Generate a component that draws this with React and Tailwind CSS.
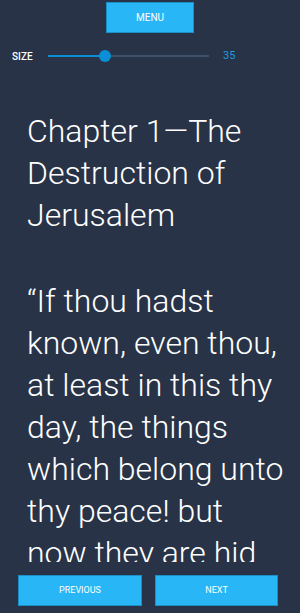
export default function App() {
  const font = { fontFamily: "Roboto, 'Noto Sans', sans-serif" };
  return (
    <div className="flex h-[613px] w-[300px] flex-col overflow-hidden bg-[#283347]" style={font}>
      <div className="flex justify-center pt-[2px]">
        <button className="h-[31px] w-[88px] border border-[#1d8fc7] bg-[#29b6f6] text-[10px] text-white">
          MENU
        </button>
      </div>
      <div className="mt-[9px] flex h-[28px] items-center pl-[12px]">
        <span className="w-[36px] text-[10px] font-medium text-white">SIZE</span>
        <div className="relative h-[2px] w-[161px] bg-[#3e5068]">
          <div className="absolute left-0 top-0 h-[2px] w-[57px] bg-[#0a8fd6]" />
          <div className="absolute left-[51px] top-[-5px] h-[12px] w-[12px] rounded-full bg-[#0a8fd6]" />
        </div>
        <span className="ml-[14px] text-[11px] text-[#1e9be0]">35</span>
      </div>
      <div className="min-h-0 flex-1 overflow-hidden pl-[27px] pr-[12px] pt-[40px] text-[32px] font-light leading-[42px] text-white">
        <h1>Chapter 1—The Destruction of Jerusalem</h1>
        <p className="mt-[44px]">
          “If thou hadst known, even thou, at least in this thy day, the things which belong unto thy peace! but now they are hid from thine eyes.
        </p>
      </div>
      <div className="flex gap-[13px] pb-[7px] pl-[18px] pt-[13px]">
        <button className="h-[31px] w-[124px] border border-[#1d8fc7] bg-[#29b6f6] text-[9px] text-white">
          PREVIOUS
        </button>
        <button className="h-[31px] w-[123px] border border-[#1d8fc7] bg-[#29b6f6] text-[9px] text-white">
          NEXT
        </button>
      </div>
    </div>
  );
}
